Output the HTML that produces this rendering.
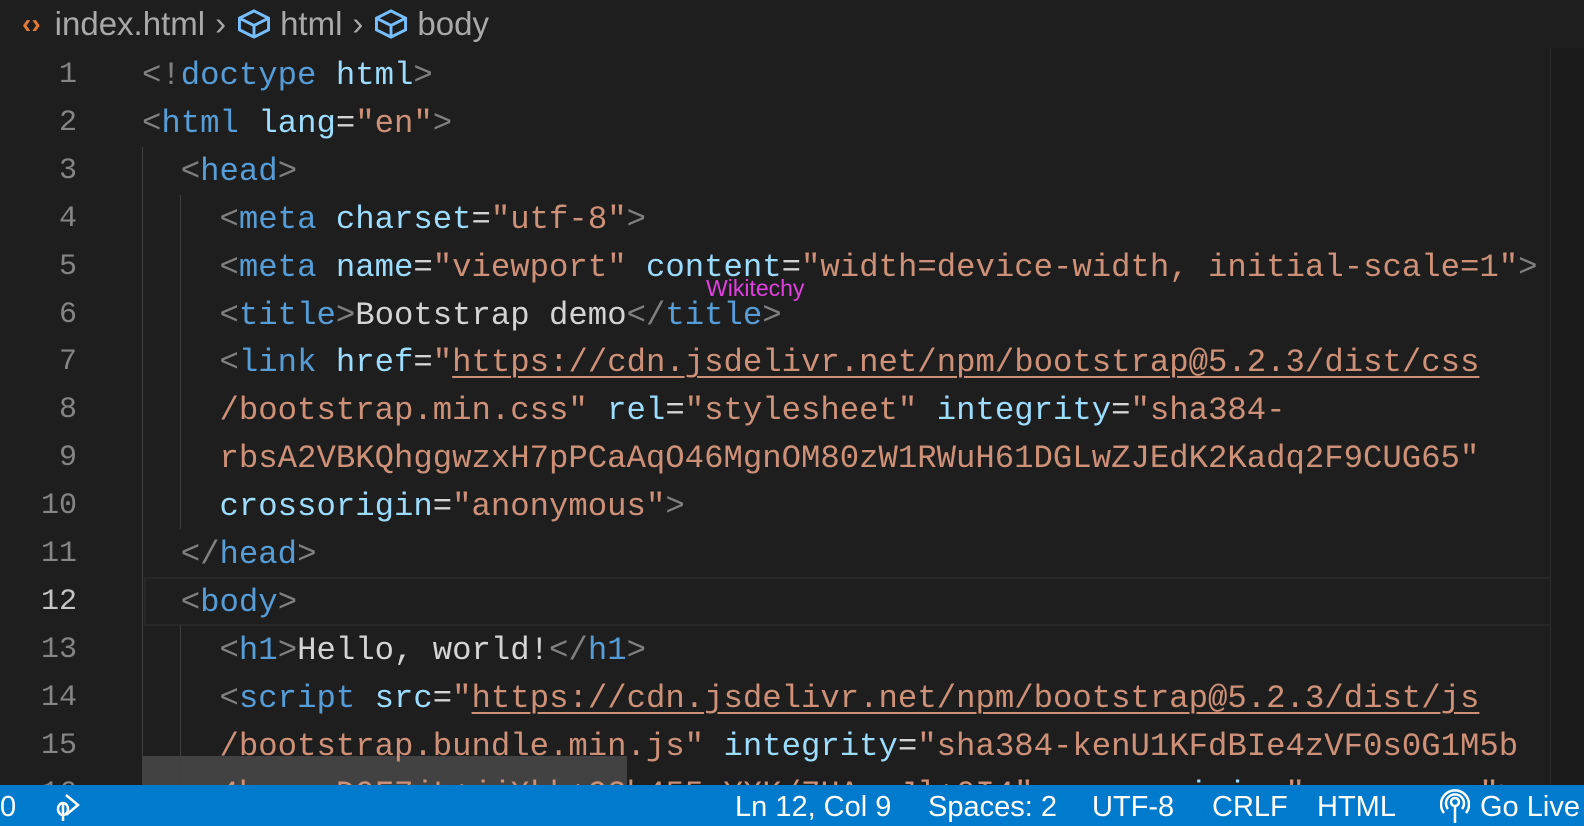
<!DOCTYPE html>
<html><head><style>
body{margin:0;width:1584px;height:826px;background:#1e1e1e;overflow:hidden;position:relative;font-family:"Liberation Mono",monospace}
.bc{position:absolute;top:0;left:0;height:48px;font-family:"Liberation Sans",sans-serif;font-size:33px;color:#a9a9a9;display:flex;align-items:center}
.ln{position:absolute;left:0;width:77px;text-align:right;color:#858585;font-size:30px;line-height:47.9px}
.code{position:absolute;left:142px;font-size:32.3px;line-height:47.9px;white-space:pre;color:#d4d4d4}
.b{color:#808080}.t{color:#569cd6}.a{color:#9cdcfe}.s{color:#ce9178}.u{text-decoration:underline;text-decoration-thickness:2px;text-underline-offset:5px}
.status{position:absolute;left:0;top:785px;width:1584px;height:41px;background:#007acc;color:#fff;font-family:"Liberation Sans",sans-serif;font-size:29px}
.status span{position:absolute;top:6px}
.guide{position:absolute;width:1px;background:#404040}
</style></head><body>
<div class="bc"><span style="color:#e37933;margin-left:22px;font-weight:bold;font-size:28px">‹›</span><span style="margin-left:14px">index.html</span><span style="margin:0 10px">›</span>
<svg width="36" height="32" viewBox="0 0 24 22"><path d="M12 2 L22 7 L22 15 L12 20 L2 15 L2 7 Z M2 7 L12 12 L22 7 M12 12 L12 20" fill="none" stroke="#75beff" stroke-width="2"/></svg><span style="margin-left:8px">html</span><span style="margin:0 10px">›</span>
<svg width="36" height="32" viewBox="0 0 24 22"><path d="M12 2 L22 7 L22 15 L12 20 L2 15 L2 7 Z M2 7 L12 12 L22 7 M12 12 L12 20" fill="none" stroke="#75beff" stroke-width="2"/></svg><span style="margin-left:8px">body</span></div>
<div style="position:absolute;left:142px;top:756px;width:485px;height:29px;background:#424242"></div>
<div style="position:absolute;left:144px;top:577px;width:1406px;height:45px;border:2px solid #282828"></div>
<div class="guide" style="left:142px;top:147px;height:638px"></div>
<div class="guide" style="left:180px;top:195px;height:334px"></div>
<div class="guide" style="left:180px;top:625px;height:160px"></div>
<div style="position:absolute;left:1550px;top:48px;width:34px;height:737px;background:#1b1b1b;border-left:1px solid #2a2a2a"></div>
<div class="ln" style="top:52px">1<br>2<br>3<br>4<br>5<br>6<br>7<br>8<br>9<br>10<br>11<br><span style="color:#c6c6c6">12</span><br>13<br>14<br>15<br>16</div>
<div class="code" style="top:52px"><span class="b">&lt;!</span><span class="t">doctype</span> <span class="a">html</span><span class="b">&gt;</span>
<span class="b">&lt;</span><span class="t">html</span> <span class="a">lang</span>=<span class="s">"en"</span><span class="b">&gt;</span>
  <span class="b">&lt;</span><span class="t">head</span><span class="b">&gt;</span>
    <span class="b">&lt;</span><span class="t">meta</span> <span class="a">charset</span>=<span class="s">"utf-8"</span><span class="b">&gt;</span>
    <span class="b">&lt;</span><span class="t">meta</span> <span class="a">name</span>=<span class="s">"viewport"</span> <span class="a">content</span>=<span class="s">"width=device-width, initial-scale=1"</span><span class="b">&gt;</span>
    <span class="b">&lt;</span><span class="t">title</span><span class="b">&gt;</span>Bootstrap demo<span class="b">&lt;/</span><span class="t">title</span><span class="b">&gt;</span>
    <span class="b">&lt;</span><span class="t">link</span> <span class="a">href</span>=<span class="s">"<span class="u">https://cdn.jsdelivr.net/npm/bootstrap@5.2.3/dist/css</span></span>
    <span class="s">/bootstrap.min.css"</span> <span class="a">rel</span>=<span class="s">"stylesheet"</span> <span class="a">integrity</span>=<span class="s">"sha384-</span>
    <span class="s">rbsA2VBKQhggwzxH7pPCaAqO46MgnOM80zW1RWuH61DGLwZJEdK2Kadq2F9CUG65"</span>
    <span class="a">crossorigin</span>=<span class="s">"anonymous"</span><span class="b">&gt;</span>
  <span class="b">&lt;/</span><span class="t">head</span><span class="b">&gt;</span>
  <span class="b">&lt;</span><span class="t">body</span><span class="b">&gt;</span>
    <span class="b">&lt;</span><span class="t">h1</span><span class="b">&gt;</span>Hello, world!<span class="b">&lt;/</span><span class="t">h1</span><span class="b">&gt;</span>
    <span class="b">&lt;</span><span class="t">script</span> <span class="a">src</span>=<span class="s">"<span class="u">https://cdn.jsdelivr.net/npm/bootstrap@5.2.3/dist/js</span></span>
    <span class="s">/bootstrap.bundle.min.js"</span> <span class="a">integrity</span>=<span class="s">"sha384-kenU1KFdBIe4zVF0s0G1M5b</span>
    <span class="s">4hcpxyD9F7jL+jjXkk+Q2h455rYXK/7HAuoJl+0I4"</span> <span class="a">crossorigin</span>=<span class="s">"anonymous"</span><span class="b">&gt;</span></div>
<div style="position:absolute;left:706px;top:275px;color:#e040e0;font-family:'Liberation Sans',sans-serif;font-size:23px">Wikitechy</div>
<div class="status"><span style="left:0">0</span>
<svg style="position:absolute;left:52px;top:6px" width="38" height="32" viewBox="0 0 38 32"><path d="M14 4 L26 14 L14 24 M6 18 a5 6 0 1 0 10 0 a5 6 0 1 0 -10 0 M11 12 v18" fill="none" stroke="#fff" stroke-width="2.5"/></svg>
<span style="left:735px">Ln 12, Col 9</span><span style="left:928px">Spaces: 2</span><span style="left:1092px">UTF-8</span><span style="left:1212px">CRLF</span><span style="left:1317px">HTML</span>
<svg style="position:absolute;left:1440px;top:4px" width="30" height="34" viewBox="0 0 30 34"><circle cx="15" cy="13" r="4" fill="none" stroke="#fff" stroke-width="2.5"/><path d="M8 20 a9 9 0 1 1 14 0 M4 24 a14 14 0 1 1 22 0 M15 17 v17" fill="none" stroke="#fff" stroke-width="2.5"/></svg>
<span style="left:1480px">Go Live</span></div>
</body></html>
